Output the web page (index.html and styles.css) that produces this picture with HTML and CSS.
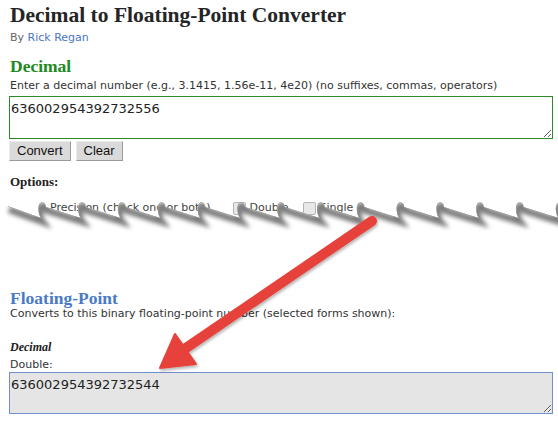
FILE: index.html
```html
<!DOCTYPE html>
<html>
<head>
<meta charset="utf-8">
<link rel="stylesheet" href="styles.css">
</head>
<body>
<div class="page">
  <div class="content">
    <h1 class="title">Decimal to Floating-Point Converter</h1>
    <p class="byline">By <a class="author">Rick Regan</a></p>
    <h2 class="sec sec-green">Decimal</h2>
    <p class="note">Enter a decimal number (e.g., 3.1415, 1.56e-11, 4e20) (no suffixes, commas, operators)</p>
    <textarea class="box box-in">636002954392732556</textarea>
    <div class="btns">
      <button class="btn">Convert</button>
      <button class="btn">Clear</button>
    </div>
    <h3 class="opts">Options:</h3>
    <div class="optrow">
      <span class="lbl">Precision (check one or both)</span>
      <span class="cb cb-first"></span><span>Double</span>
      <span class="cb cb-second"></span><span>Single</span>
    </div>
    <h2 class="sec sec-blue">Floating-Point</h2>
    <p class="note2">Converts to this binary floating-point number (selected forms shown):</p>
    <h4 class="kind">Decimal</h4>
    <p class="dbl">Double:</p>
    <textarea class="box box-out" readonly>636002954392732544</textarea>
  </div>

  <svg class="tear" width="558" height="40" viewBox="0 0 558 40">
    <defs>
      <path id="edgeLine" d="M 8 10 L 41 22 C 38 18 37 8 41 6.5 C 44 5.5 46 8 46 11 L 80.8 22 C 77.8 18 76.8 8 80.8 6.5 C 83.8 5.5 85.8 8 85.8 11 L 120.6 22 C 117.6 18 116.6 8 120.6 6.5 C 123.6 5.5 125.6 8 125.6 11 L 160.4 22 C 157.4 18 156.4 8 160.4 6.5 C 163.4 5.5 165.4 8 165.4 11 L 200.2 22 C 197.2 18 196.2 8 200.2 6.5 C 203.2 5.5 205.2 8 205.2 11 L 240 22 C 237 18 236 8 240 6.5 C 243 5.5 245 8 245 11 L 279.8 22 C 276.8 18 275.8 8 279.8 6.5 C 282.8 5.5 284.8 8 284.8 11 L 319.6 22 C 316.6 18 315.6 8 319.6 6.5 C 322.6 5.5 324.6 8 324.6 11 L 359.4 22 C 356.4 18 355.4 8 359.4 6.5 C 362.4 5.5 364.4 8 364.4 11 L 399.2 22 C 396.2 18 395.2 8 399.2 6.5 C 402.2 5.5 404.2 8 404.2 11 L 439 22 C 436 18 435 8 439 6.5 C 442 5.5 444 8 444 11 L 478.8 22 C 475.8 18 474.8 8 478.8 6.5 C 481.8 5.5 483.8 8 483.8 11 L 518.6 22 C 515.6 18 514.6 8 518.6 6.5 C 521.6 5.5 523.6 8 523.6 11 L 558.4 22 C 555.4 18 554.4 8 558.4 6.5 C 561.4 5.5 563.4 8 563.4 11 L 600 24"/>
      <path id="edgeFill" d="M 8 10 L 41 22 C 38 18 37 8 41 6.5 C 44 5.5 46 8 46 11 L 80.8 22 C 77.8 18 76.8 8 80.8 6.5 C 83.8 5.5 85.8 8 85.8 11 L 120.6 22 C 117.6 18 116.6 8 120.6 6.5 C 123.6 5.5 125.6 8 125.6 11 L 160.4 22 C 157.4 18 156.4 8 160.4 6.5 C 163.4 5.5 165.4 8 165.4 11 L 200.2 22 C 197.2 18 196.2 8 200.2 6.5 C 203.2 5.5 205.2 8 205.2 11 L 240 22 C 237 18 236 8 240 6.5 C 243 5.5 245 8 245 11 L 279.8 22 C 276.8 18 275.8 8 279.8 6.5 C 282.8 5.5 284.8 8 284.8 11 L 319.6 22 C 316.6 18 315.6 8 319.6 6.5 C 322.6 5.5 324.6 8 324.6 11 L 359.4 22 C 356.4 18 355.4 8 359.4 6.5 C 362.4 5.5 364.4 8 364.4 11 L 399.2 22 C 396.2 18 395.2 8 399.2 6.5 C 402.2 5.5 404.2 8 404.2 11 L 439 22 C 436 18 435 8 439 6.5 C 442 5.5 444 8 444 11 L 478.8 22 C 475.8 18 474.8 8 478.8 6.5 C 481.8 5.5 483.8 8 483.8 11 L 518.6 22 C 515.6 18 514.6 8 518.6 6.5 C 521.6 5.5 523.6 8 523.6 11 L 558.4 22 C 555.4 18 554.4 8 558.4 6.5 C 561.4 5.5 563.4 8 563.4 11 L 600 24 L 600 40 L 0 40 L 0 10 Z"/>
      <clipPath id="below">
        <use href="#edgeFill"/>
      </clipPath>
      <filter id="soft" x="-5%" y="-50%" width="110%" height="200%">
        <feGaussianBlur stdDeviation="2"/>
      </filter>
    </defs>
    <use href="#edgeFill" class="tear-paper"/>
    <g clip-path="url(#below)">
      <use href="#edgeLine" class="tear-shadow" filter="url(#soft)" transform="translate(1 3.5)"/>
      <use href="#edgeLine" class="tear-edge"/>
    </g>
  </svg>

  <svg class="arrow" width="558" height="421" viewBox="0 0 558 421">
    <defs>
      <filter id="ashadow" x="-10%" y="-10%" width="120%" height="120%">
        <feDropShadow dx="1" dy="2" stdDeviation="1.5" flood-color="#000" flood-opacity="0.3"/>
      </filter>
    </defs>
    <g filter="url(#ashadow)" fill="#e6423b" stroke="#e6423b">
      <line x1="372" y1="221" x2="186" y2="348" stroke-width="10" stroke-linecap="round"/>
      <polygon points="160,368 175,334 196,364" stroke-width="2" stroke-linejoin="round"/>
    </g>
  </svg>
</div>
</body>
</html>
```
FILE: styles.css
```css
html, body {
  margin: 0;
  padding: 0;
  background: #fff;
}

.page {
  position: relative;
  width: 558px;
  height: 421px;
  overflow: hidden;
  font-family: "DejaVu Sans", Verdana, sans-serif;
  font-size: 11px;
  color: #333;
}

.content {
  padding: 0 5px 0 9px;
}

.title {
  margin: 0;
  padding: 1px 0 0 1px;
  font: bold 21.5px/28px "Liberation Serif", "Times New Roman", serif;
  color: #252525;
}

.byline {
  margin: 2px 0 0 1px;
  line-height: 14px;
  color: #666;
}

.author {
  color: #4a76c2;
  text-decoration: none;
}

.sec {
  margin: 0 0 0 1px;
  font: bold 17.5px/16px "Liberation Serif", "Times New Roman", serif;
}

.sec-green {
  margin-top: 13px;
  color: #208a20;
}

.sec-blue {
  margin-top: 75px;
  color: #4a7ac6;
}

.note {
  margin: 5px 0 0 1px;
  line-height: 14px;
  color: #333;
}

.box {
  display: block;
  box-sizing: border-box;
  width: 544px;
  height: 43px;
  margin: 3px 0 0 0;
  padding: 4px 1px;
  font-family: "DejaVu Sans", Verdana, sans-serif;
  font-size: 13px;
  line-height: 16px;
  color: #222;
  border: 1px solid #2a8a2a;
  border-radius: 0;
  outline: none;
  resize: both;
  overflow: hidden;
}

.box-in {
  background: #fff;
}

.box-out {
  height: 42px;
  margin-top: 0;
  background: #e5e5e5;
  border-color: #6f90cc;
}

.btns {
  display: flex;
  gap: 5px;
  margin-top: 2px;
}

.btn {
  height: 20px;
  padding: 0 7px;
  font: 13px/18px "Liberation Sans", Arial, sans-serif;
  color: #111;
  background: #dadada;
  border: 1px solid;
  border-color: #ececec #9a9a9a #9a9a9a #ececec;
  border-radius: 0;
}

.opts {
  margin: 13px 0 0 1px;
  font: bold 13px/16px "Liberation Serif", "Times New Roman", serif;
  color: #222;
}

.optrow {
  display: flex;
  align-items: center;
  margin: 11px 0 0 0;
  padding-left: 41px;
  height: 14px;
  line-height: 14px;
  color: #444;
}

.cb {
  display: inline-block;
  width: 11px;
  height: 11px;
  margin: 0 4px 0 10px;
  border: 1px solid #b4b4b4;
  border-radius: 2px;
  background: #e8e8e8;
}

.cb-first {
  margin-left: 22px;
}

.cb-second {
  margin-left: 14px;
}

.note2 {
  margin: 1px 0 0 1px;
  line-height: 14px;
  color: #333;
}

.kind {
  margin: 19px 0 0 1px;
  font: italic bold 12px/14px "Liberation Serif", "Times New Roman", serif;
  color: #222;
}

.dbl {
  margin: 4px 0 0 1px;
  line-height: 14px;
  color: #333;
}

.tear {
  position: absolute;
  left: 0;
  top: 196px;
}

.tear-paper {
  fill: #fff;
}

.tear-shadow {
  fill: none;
  stroke: #7c7c7c;
  stroke-width: 7;
}

.tear-edge {
  fill: none;
  stroke: #9a9a9a;
  stroke-width: 1;
}

.arrow {
  position: absolute;
  left: 0;
  top: 0;
  pointer-events: none;
}
```
